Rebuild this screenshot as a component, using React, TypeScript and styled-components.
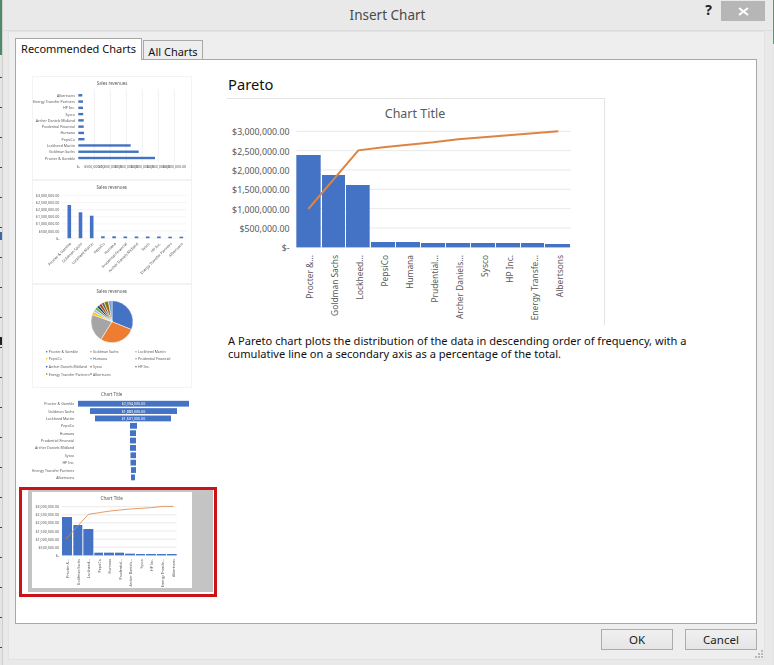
import React from "react";
import styled, { createGlobalStyle } from "styled-components";

const Global = createGlobalStyle`
  html, body { margin: 0; padding: 0; background: #e9e9e9; }
  * { box-sizing: border-box; }
`;

const UI_FONT = `"Noto Sans", "Open Sans", "DejaVu Sans", sans-serif`;
const BLUE = "#4472c4";
const ORANGE = "#dd8344";
const GREY = "#595959";

const Page = styled.div`
  width: 774px;
  height: 665px;
  display: flex;
  overflow: hidden;
  background: #e9e9e9;
  font-family: ${UI_FONT};
`;
const LeftEdge = styled.div`
  width: 2px;
  flex: none;
  background:
    linear-gradient(#4f8a68 0 55px, transparent 55px),
    linear-gradient(transparent 232px, #3d68a8 232px 240px, transparent 240px 337px, #222 337px 345px, transparent 345px),
    repeating-linear-gradient(#e4e4e4 0 17px, #444 17px 18px, #e4e4e4 18px 30px);
`;
const RightEdge = styled.div`
  width: 2px;
  flex: none;
  background: linear-gradient(to right, #e9e9e9 0 1px, #5d9477 1px) 0 0 / 2px 44px no-repeat, #e6e6e6;
`;
const Dialog = styled.div`
  flex: 1;
  display: flex;
  flex-direction: column;
  min-width: 0;
  border-left: 1px solid #cfcfcf;
  background: #e9e9e9;
`;
const TitleBar = styled.div`
  height: 31px;
  flex: none;
  display: grid;
  grid-template-columns: 1fr auto 1fr;
  border-bottom: 1px solid #dcdcdc;
`;
const DialogTitle = styled.div`
  font-size: 13.5px;
  line-height: 30px;
  color: #4a4a4a;
`;
const WindowControls = styled.div`
  display: flex;
  justify-content: flex-end;
  align-items: flex-start;
  padding: 1px 7px 0 0;
`;
const HelpMark = styled.span`
  font-size: 14px;
  font-weight: 700;
  line-height: 18px;
  color: #222;
  margin-right: 9px;
`;
const CloseButton = styled.div`
  width: 44px;
  height: 20px;
  background: #b6b6b6;
  display: flex;
  align-items: center;
  justify-content: center;
`;
const Body = styled.div`
  position: relative;
  flex: 1;
  min-height: 0;
  display: flex;
  flex-direction: column;
  margin: 0 7px 5px 5px;
  padding: 6px 7px 0 6px;
  background: #eeeeee;
  border: 1px solid #e2e2e2;
`;
const TabRow = styled.div`
  display: flex;
  align-items: flex-end;
  height: 21px;
  flex: none;
`;
const Tab = styled.div<{ $active?: boolean }>`
  position: relative;
  z-index: ${(p) => (p.$active ? 2 : 1)};
  width: ${(p) => (p.$active ? "127px" : "60px")};
  height: ${(p) => (p.$active ? "22px" : "19px")};
  margin-bottom: ${(p) => (p.$active ? "-1px" : "0")};
  margin-left: ${(p) => (p.$active ? "0" : "1px")};
  padding-top: ${(p) => (p.$active ? "0" : "1px")};
  border: 1px solid #a8a8a8;
  border-bottom: ${(p) => (p.$active ? "none" : "0")};
  background: ${(p) => (p.$active ? "#fff" : "#eeeeee")};
  font-size: 11px;
  line-height: 20px;
  text-align: center;
  color: #111;
  white-space: nowrap;
`;
const Panel = styled.div`
  flex: 1;
  min-height: 0;
  display: flex;
  background: #fff;
  border: 1px solid #a8a8a8;
`;
const ThumbColumn = styled.div`
  width: 203px;
  flex: none;
  padding: 16px 0 0 3px;
  display: flex;
  flex-direction: column;
`;
const Thumb = styled.svg<{ $h: number }>`
  display: block;
  width: 160px;
  height: ${(p) => p.$h}px;
  margin-left: 13px;
  flex: none;
  filter: blur(0.35px);
`;
const SelectedFrame = styled.div`
  width: 198px;
  height: 110px;
  flex: none;
  border: 3px solid #cc1219;
  padding: 0 1px 2px 6px;
  background: #fff;
`;
const SelectedInner = styled.div`
  height: 100%;
  padding: 2px 21px 4px 4px;
  background: #c4c4c4;
`;
const SelectedThumb = styled.svg`
  display: block;
  width: 160px;
  height: 96px;
  background: #fff;
  filter: blur(0.35px);
`;
const Detail = styled.div`
  flex: 1;
  min-width: 0;
  padding: 13px 0 0 8px;
`;
const ChartName = styled.h2`
  margin: 0 0 3px 1px;
  font-size: 14.7px;
  line-height: 22px;
  font-weight: 400;
  color: #111;
`;
const ChartFrame = styled.div`
  width: 378px;
  height: 227px;
  border-top: 1px solid #e4e4e4;
  border-right: 1px solid #e4e4e4;
`;
const MainSvg = styled.svg`
  display: block;
  width: 377px;
  height: 226px;
`;
const Description = styled.p`
  margin: 9px 0 0 1px;
  width: 470px;
  font-size: 11.1px;
  line-height: 13px;
  color: #111;
`;
const Footer = styled.div`
  height: 35px;
  flex: none;
  display: flex;
  justify-content: flex-end;
  gap: 12px;
  padding-top: 5px;
`;
const Button = styled.div`
  width: 72px;
  height: 21px;
  border: 1px solid #acacac;
  background: linear-gradient(#f0f0f0, #e5e5e5);
  font-size: 11.5px;
  line-height: 19px;
  text-align: center;
  color: #222;
`;
const Grip = styled.svg`
  position: absolute;
  right: 0;
  bottom: 0;
  width: 9px;
  height: 9px;
`;
const SvgText = styled.text<{ $size: number; $color?: string; $anchor?: string }>`
  font-family: ${UI_FONT};
  font-size: ${(p) => p.$size}px;
  fill: ${(p) => p.$color ?? GREY};
  text-anchor: ${(p) => p.$anchor ?? "middle"};
  dominant-baseline: central;
`;

type Bar = [number, number, number];

const shortNames = ["Procter &...", "Goldman Sachs", "Lockheed...", "PepsiCo", "Humana", "Prudential...", "Archer Daniels...", "Sysco", "HP Inc.", "Energy Transfe...", "Albertsons"];
const fullNames = ["Procter & Gamble", "Goldman Sachs", "Lockheed Martin", "PepsiCo", "Humana", "Prudential Financial", "Archer Daniels Midland", "Sysco", "HP Inc.", "Energy Transfer Partners", "Albertsons"];
const money = ["$3,000,000.00", "$2,500,000.00", "$2,000,000.00", "$1,500,000.00", "$1,000,000.00", "$500,000.00", "$-"];

type ParetoProps = {
  title: string; titleX: number; titleY: number; titleSize: number;
  labelX: number; labelSize: number; y0: number; yStep: number;
  gridX1: number; gridX2: number; gridY0: number; gridStep: number;
  bars: Bar[]; bottom: number; line: number[][]; lineWidth: number;
  xCenters: number[]; xLabelTop: number; xSize: number;
};

function ParetoChart(p: ParetoProps) {
  return (
    <>
      <SvgText $size={p.titleSize} x={p.titleX} y={p.titleY}>{p.title}</SvgText>
      {money.map((m, i) => (
        <React.Fragment key={m}>
          <line x1={p.gridX1} x2={p.gridX2} y1={p.gridY0 + i * p.gridStep} y2={p.gridY0 + i * p.gridStep} stroke="#e3e3e3" strokeWidth={i === 6 ? 1 : 0.8} />
          <SvgText $size={p.labelSize} $anchor="end" x={p.labelX} y={p.y0 + i * p.yStep}>{m}</SvgText>
        </React.Fragment>
      ))}
      {p.bars.map(([x1, x2, top], i) => (
        <rect key={i} x={x1} width={x2 - x1} y={top} height={p.bottom - top} fill={BLUE} />
      ))}
      <polyline points={p.line.map((c) => c.join(",")).join(" ")} fill="none" stroke={ORANGE} strokeWidth={p.lineWidth} />
      {shortNames.map((n, i) => (
        <SvgText key={n} $size={p.xSize} $anchor="end" transform={`translate(${p.xCenters[i]} ${p.xLabelTop}) rotate(-90)`}>{n}</SvgText>
      ))}
    </>
  );
}

const mz = (x: number) => 220 + x / 3;
const mzy = (y: number) => 70 + y / 3;
const mainBars: Bar[] = ([[229, 302, 255], [306, 375, 315], [378, 449, 345], [453, 525, 516], [528, 600, 516], [603, 675, 519], [678, 750, 519], [753, 825, 519], [828, 900, 519], [903, 972, 519], [975, 1050, 522]] as Bar[]).map(([a, b, t]) => [mz(a), mz(b), mzy(t)]);
const mainLine = [[265, 417], [415, 241], [490, 232], [565, 224], [640, 217], [715, 208], [790, 202], [865, 196], [940, 190], [1015, 184]].map(([x, y]) => [mz(x), mzy(y)]);

const sz = (x: number) => 10 + x / 3;
const szy = (y: number) => 385 + y / 3;
const thumbBars: Bar[] = ([[156, 186, 396], [190, 217, 420], [220, 250, 432], [253, 279, 503], [282, 312, 503], [315, 342, 503], [345, 375, 506], [378, 405, 507], [408, 438, 507], [441, 468, 507], [471, 500, 507]] as Bar[]).map(([a, b, t]) => [sz(a), sz(b), szy(t)]);
const thumbLine = [[168, 462], [235, 388], [300, 378], [360, 372], [425, 368], [457, 364], [490, 364]].map(([x, y]) => [sz(x), szy(y)]);

function BarThumb() {
  const ends = [155, 138.7, 130.7, 84.5, 84, 83.7, 83.7, 83.2, 83, 83, 82.3];
  return (
    <Thumb $h={104} viewBox="32 76 160 104">
      <rect x="32.5" y="76.5" width="159" height="103" fill="#fff" stroke="#f3f3f3" />
      <SvgText $size={4.4} x={112} y={83}>Sales revenues</SvgText>
      {[94.3, 110.3, 126.3, 142.3, 158.3, 174.3].map((x) => (
        <line key={x} x1={x} x2={x} y1={89} y2={162} stroke="#e6e6e6" strokeWidth={0.6} />
      ))}
      {fullNames.map((n, i) => {
        const y = 158 - i * 6.27;
        return (
          <React.Fragment key={n}>
            <SvgText $size={3.6} $anchor="end" x={75} y={y}>{n}</SvgText>
            <rect x={78.3} width={ends[i] - 78.3} y={y - 1.2} height={2.4} fill={BLUE} />
          </React.Fragment>
        );
      })}
      {["$-", "$500,000.00", "$1,000,000.00", "$1,500,000.00", "$2,000,000.00", "$2,500,000.00", "$3,000,000.00"].map((m, i) => (
        <SvgText key={m} $size={3.6} x={78.3 + i * 16} y={166}>{m}</SvgText>
      ))}
    </Thumb>
  );
}

function ColumnThumb() {
  const tops = [205, 212.3, 215.7, 236.3, 236.3, 236.5, 236.5, 236.5, 236.5, 236.7, 236.7];
  return (
    <Thumb $h={104} viewBox="32 180 160 104">
      <rect x="32.5" y="180.5" width="159" height="103" fill="#fff" stroke="#f3f3f3" />
      <SvgText $size={4.4} x={111.7} y={187}>Sales revenues</SvgText>
      {money.map((m, i) => {
        const y = 195.5 + i * 7.1;
        return (
          <React.Fragment key={m}>
            <line x1={62} x2={186.7} y1={y} y2={y} stroke="#ececec" strokeWidth={0.6} />
            <SvgText $size={3.6} $anchor="end" x={59.3} y={y}>{m}</SvgText>
          </React.Fragment>
        );
      })}
      {fullNames.map((n, i) => {
        const x = 69.3 + i * 11.2;
        return (
          <React.Fragment key={n}>
            <rect x={x - 1.8} width={3.6} y={tops[i]} height={238.2 - tops[i]} fill={BLUE} />
            <SvgText $size={3.7} $anchor="end" transform={`translate(${x + 1} 243) rotate(-45)`}>{n}</SvgText>
          </React.Fragment>
        );
      })}
    </Thumb>
  );
}

function slice(cx: number, cy: number, r: number, a: number, b: number) {
  const pt = (d: number) => {
    const t = ((d - 90) * Math.PI) / 180;
    return `${cx + r * Math.cos(t)} ${cy + r * Math.sin(t)}`;
  };
  return `M${cx} ${cy}L${pt(a)}A${r} ${r} 0 ${b - a > 180 ? 1 : 0} 1 ${pt(b)}Z`;
}

function PieThumb() {
  const slices: [number, number, string][] = [
    [0, 112, BLUE], [112, 212, "#ed7d31"], [212, 290, "#a5a5a5"], [290, 298, "#ffc000"],
    [298, 306, "#9dc3e6"], [306, 314, "#70ad47"], [314, 322, "#264478"], [322, 330, "#9e480e"],
    [330, 338, "#636363"], [338, 350, "#997300"], [350, 360, "#7ba0d8"],
  ];
  const legend: [string, string, number, number][] = [
    ["Procter & Gamble", BLUE, 46.7, 351.7], ["Goldman Sachs", "#ed7d31", 91, 351.7], ["Lockheed Martin", "#a5a5a5", 136, 351.7],
    ["PepsiCo", "#ffc000", 46.7, 358.7], ["Humana", "#5b9bd5", 91, 358.7], ["Prudential Financial", "#70ad47", 136, 358.7],
    ["Archer Daniels Midland", "#264478", 46.7, 366.7], ["Sysco", "#9e480e", 91, 366.7], ["HP Inc.", "#636363", 136, 366.7],
    ["Energy Transfer Partners", "#997300", 46.7, 374], ["Albertsons", "#255e91", 91, 374],
  ];
  return (
    <Thumb $h={104} viewBox="32 284 160 104">
      <rect x="32.5" y="284.5" width="159" height="103" fill="#fff" stroke="#f3f3f3" />
      <SvgText $size={4.4} x={111.7} y={291}>Sales revenues</SvgText>
      {slices.map(([a, b, c]) => (
        <path key={a} d={slice(112, 321.7, 21, a, b)} fill={c} stroke="#fff" strokeWidth={0.5} />
      ))}
      {legend.map(([n, c, x, y]) => (
        <React.Fragment key={n}>
          <circle cx={x} cy={y} r={0.8} fill={c} />
          <SvgText $size={3.5} $anchor="start" x={x + 2} y={y}>{n}</SvgText>
        </React.Fragment>
      ))}
    </Thumb>
  );
}

function FunnelThumb() {
  const widths: number[][] = [[78, 189], [90, 177], [95, 171], [130, 137], [130, 136], [130, 136], [130, 136], [130.5, 136], [130.5, 136], [131, 136], [131, 135]];
  const values = ["$2,394,000.00", "$1,883,000.00", "$1,601,000.00"];
  return (
    <Thumb $h={99} viewBox="32 388 160 99">
      <SvgText $size={4.4} x={111.7} y={394.3}>Chart Title</SvgText>
      {fullNames.map((n, i) => {
        const y = 403.7 + i * 7.37;
        const [a, b] = widths[i];
        return (
          <React.Fragment key={n}>
            <SvgText $size={3.6} $anchor="end" x={74.3} y={y}>{n}</SvgText>
            <rect x={a} width={b - a} y={y - 2.9} height={5.8} fill={BLUE} />
            {values[i] && <SvgText $size={3.6} $color="#fff" x={133.5} y={y}>{values[i]}</SvgText>}
          </React.Fragment>
        );
      })}
    </Thumb>
  );
}

export default function App() {
  return (
    <Page>
      <Global />
      <LeftEdge />
      <Dialog>
        <TitleBar>
          <span />
          <DialogTitle>Insert Chart</DialogTitle>
          <WindowControls>
            <HelpMark>?</HelpMark>
            <CloseButton>
              <svg width="11" height="9" viewBox="0 0 11 9">
                <path d="M1 1L10 8M10 1L1 8" stroke="#fff" strokeWidth="2" />
              </svg>
            </CloseButton>
          </WindowControls>
        </TitleBar>
        <Body>
          <TabRow>
            <Tab $active>Recommended Charts</Tab>
            <Tab>All Charts</Tab>
          </TabRow>
          <Panel>
            <ThumbColumn>
              <BarThumb />
              <ColumnThumb />
              <PieThumb />
              <FunnelThumb />
              <SelectedFrame>
                <SelectedInner>
                  <SelectedThumb viewBox="32 492 160 96">
                    <ParetoChart
                      title="Chart Title" titleX={111.7} titleY={498} titleSize={4.6}
                      labelX={59} labelSize={3.6} y0={506.7} yStep={8.1}
                      gridX1={61.7} gridX2={176.7} gridY0={506.7} gridStep={8.1}
                      bars={thumbBars} bottom={555.3} line={thumbLine} lineWidth={0.8}
                      xCenters={[171, 204, 235, 267, 297, 330, 360, 393, 425, 457, 489].map(sz)} xLabelTop={559} xSize={3.6}
                    />
                  </SelectedThumb>
                </SelectedInner>
              </SelectedFrame>
            </ThumbColumn>
            <Detail>
              <ChartName>Pareto</ChartName>
              <ChartFrame>
                <MainSvg viewBox="227 99 377 226">
                  <ParetoChart
                    title="Chart Title" titleX={415} titleY={113} titleSize={12.5}
                    labelX={289.5} labelSize={8.8} y0={132.3} yStep={19.3}
                    gridX1={296.3} gridX2={570.7} gridY0={131.3} gridStep={19.33}
                    bars={mainBars} bottom={247.3} line={mainLine} lineWidth={2}
                    xCenters={[267, 342, 417, 492, 567, 642, 717, 792, 867, 942, 1017].map(mz)} xLabelTop={255} xSize={8.4}
                  />
                </MainSvg>
              </ChartFrame>
              <Description>
                A Pareto chart plots the distribution of the data in descending order of frequency, with a cumulative line on a secondary axis as a percentage of the total.
              </Description>
            </Detail>
          </Panel>
          <Footer>
            <Button>OK</Button>
            <Button>Cancel</Button>
          </Footer>
          <Grip viewBox="0 0 9 9">
            <g fill="#b8b8b8">
              <rect x="6" y="0" width="2" height="2" />
              <rect x="3" y="3" width="2" height="2" />
              <rect x="6" y="3" width="2" height="2" />
              <rect x="0" y="6" width="2" height="2" />
              <rect x="3" y="6" width="2" height="2" />
              <rect x="6" y="6" width="2" height="2" />
            </g>
          </Grip>
        </Body>
      </Dialog>
      <RightEdge />
    </Page>
  );
}
